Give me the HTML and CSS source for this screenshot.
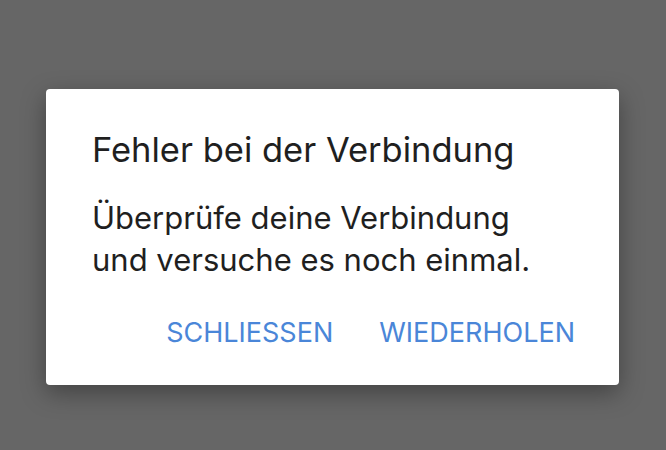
FILE: index.html
```html
<!DOCTYPE html>
<html>
<head>
<meta charset="utf-8">
<link rel="stylesheet" href="styles.css">
</head>
<body>
<div class="screen">
  <div class="dialog">
    <h1 class="title">Fehler bei der Verbindung</h1>
    <p class="message">Überprüfe deine Verbindung<br>und versuche es noch einmal.</p>
    <div class="actions">
      <button class="btn">SCHLIESSEN</button>
      <button class="btn">WIEDERHOLEN</button>
    </div>
  </div>
</div>
</body>
</html>
```
FILE: styles.css
```css
html, body {
  margin: 0;
  padding: 0;
}
body {
  width: 666px;
  height: 450px;
  background: #666666;
  overflow: hidden;
  font-family: Inter, Roboto, sans-serif;
}
.screen {
  padding: 89px 0 0 46px;
}
.dialog {
  width: 573px;
  height: 296px;
  box-sizing: border-box;
  background: #ffffff;
  border-radius: 4px;
  box-shadow: 0 8px 24px rgba(0,0,0,0.35);
  padding: 39px 44px 0 46px;
  display: flex;
  flex-direction: column;
}
.title {
  margin: 0;
  font-size: 34.5px;
  font-weight: 400;
  color: #1f1f1f;
  line-height: 44px;
}
.message {
  margin: 25px 0 0 0;
  font-size: 31px;
  line-height: 42px;
  color: #1f1f1f;
}
.actions {
  display: flex;
  justify-content: flex-end;
  gap: 46px;
  margin-top: 37px;
}
.btn {
  border: 0;
  background: none;
  padding: 0;
  font-family: inherit;
  font-size: 27px;
  color: #4a86d8;
  line-height: 30px;
}
```
